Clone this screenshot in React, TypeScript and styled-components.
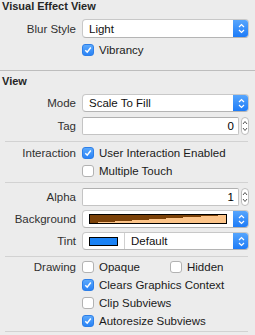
import styled, { createGlobalStyle } from "styled-components";

const Global = createGlobalStyle`
  body {
    margin: 0;
    background: #ececec;
    font-family: "Liberation Sans", Arial, sans-serif;
    font-size: 11.5px;
    color: #000;
  }
`;

const Panel = styled.div`
  width: 255px;
  height: 335px;
  display: flex;
  flex-direction: column;
  background: #ececec;
  overflow: hidden;
`;

const Section = styled.div<{ $top: number; $bottom: number }>`
  display: flex;
  flex-direction: column;
  padding-top: ${(p) => p.$top}px;
  padding-bottom: ${(p) => p.$bottom}px;
`;

const Header = styled.div`
  height: 13px;
  line-height: 13px;
  padding-left: 2px;
  font-size: 11px;
  font-weight: bold;
  color: #262626;
`;

const Rule = styled.div<{ $full?: boolean; $mt: number }>`
  height: 1px;
  margin-top: ${(p) => p.$mt}px;
  margin-left: ${(p) => (p.$full ? 0 : 5)}px;
  width: ${(p) => (p.$full ? 255 : 243)}px;
  background: ${(p) => (p.$full ? "#bdbdbd" : "#d2d2d2")};
`;

const Row = styled.div<{ $mt?: number; $h?: number }>`
  display: grid;
  grid-template-columns: 76px 167px;
  column-gap: 6px;
  align-items: center;
  height: ${(p) => p.$h ?? 18}px;
  margin-top: ${(p) => p.$mt ?? 0}px;
`;

const Label = styled.div`
  text-align: right;
  color: #303030;
  white-space: nowrap;
`;

const Popup = styled.div<{ $h?: number }>`
  position: relative;
  display: flex;
  align-items: center;
  height: ${(p) => p.$h ?? 18}px;
  box-sizing: border-box;
  background: #fff;
  border: 1px solid #c8c8c8;
  border-bottom-color: #b4b4b4;
  border-radius: 4px;
  padding-right: 15px;
  overflow: hidden;
`;

const PopupText = styled.span`
  padding-left: 6px;
  color: #111;
`;

const Arrows = styled.div`
  position: absolute;
  top: -1px;
  right: -1px;
  bottom: -1px;
  width: 16px;
  border-radius: 0 4px 4px 0;
  background: linear-gradient(#5aa8fd, #1a79f7);
  display: flex;
  align-items: center;
  justify-content: center;
`;

const Field = styled.div`
  display: flex;
  align-items: center;
  gap: 2px;
`;

const NumberBox = styled.div`
  flex: 1;
  height: 18px;
  box-sizing: border-box;
  background: #fff;
  border: 1px solid #c4c4c4;
  border-top-color: #b0b0b0;
  border-radius: 2px;
  text-align: right;
  padding-right: 4px;
  line-height: 16px;
`;

const Stepper = styled.div`
  width: 8px;
  height: 18px;
  box-sizing: border-box;
  border: 1px solid #bdbdbd;
  border-radius: 5px;
  background: #fff;
  display: flex;
  align-items: center;
  justify-content: center;
`;

const Checks = styled.div`
  display: flex;
  align-items: center;
`;

const Check = styled.label<{ $w?: number }>`
  display: flex;
  align-items: center;
  gap: 5px;
  width: ${(p) => (p.$w ? `${p.$w}px` : "auto")};
  color: #1a1a1a;
  white-space: nowrap;
`;

const Box = styled.span<{ $on: boolean }>`
  width: 12px;
  height: 12px;
  box-sizing: border-box;
  border-radius: 3px;
  display: flex;
  align-items: center;
  justify-content: center;
  background: ${(p) => (p.$on ? "linear-gradient(#5ca9fc, #2a83f6)" : "#fff")};
  border: 1px solid ${(p) => (p.$on ? "#2d7fe8" : "#b2b2b2")};
`;

const ColorWell = styled.div`
  margin-left: 6px;
  width: 136px;
  height: 8px;
  border: 1px solid #000;
  background: linear-gradient(to bottom right, #7b4108 50%, #fcc489 50%);
`;

const Swatch = styled.div`
  margin-left: 6px;
  width: 27px;
  height: 7px;
  border: 1px solid #000;
  background: #1a82f5;
`;

const Divider = styled.div`
  width: 1px;
  align-self: stretch;
  margin-left: 6px;
  background: #d0d0d0;
`;

function Chevrons({ color = "#fff" }: { color?: string }) {
  return (
    <svg width="7" height="11" viewBox="0 0 7 11">
      <polyline points="1,4 3.5,1.5 6,4" fill="none" stroke={color} strokeWidth="1.2" />
      <polyline points="1,7 3.5,9.5 6,7" fill="none" stroke={color} strokeWidth="1.2" />
    </svg>
  );
}

function CheckBox({ on, label, w }: { on: boolean; label: string; w?: number }) {
  return (
    <Check $w={w}>
      <Box $on={on}>
        {on && (
          <svg width="8" height="8" viewBox="0 0 8 8">
            <polyline points="1.3,4.2 3.2,6.2 6.8,1.5" fill="none" stroke="#fff" strokeWidth="1.5" />
          </svg>
        )}
      </Box>
      {label}
    </Check>
  );
}

function Select({ text, h }: { text: string; h?: number }) {
  return (
    <Popup $h={h}>
      <PopupText>{text}</PopupText>
      <Arrows>
        <Chevrons />
      </Arrows>
    </Popup>
  );
}

function NumberField({ value }: { value: string }) {
  return (
    <Field>
      <NumberBox>{value}</NumberBox>
      <Stepper>
        <svg width="6" height="14" viewBox="0 0 6 14">
          <polyline points="1,5 3,2.5 5,5" fill="none" stroke="#555" strokeWidth="1" />
          <polyline points="1,9 3,11.5 5,9" fill="none" stroke="#555" strokeWidth="1" />
        </svg>
      </Stepper>
    </Field>
  );
}

export default function App() {
  return (
    <Panel>
      <Global />
      <Section $top={0} $bottom={11}>
        <Header>Visual Effect View</Header>
        <Row $mt={6} $h={19}>
          <Label>Blur Style</Label>
          <Select text="Light" h={19} />
        </Row>
        <Row $mt={3}>
          <span />
          <CheckBox on label="Vibrancy" />
        </Row>
      </Section>
      <Rule $full $mt={0} />
      <Section $top={4} $bottom={0}>
        <Header>View</Header>
        <Row $mt={6}>
          <Label>Mode</Label>
          <Select text="Scale To Fill" />
        </Row>
        <Row $mt={5}>
          <Label>Tag</Label>
          <NumberField value="0" />
        </Row>
        <Rule $mt={6} />
        <Row $mt={2}>
          <Label>Interaction</Label>
          <CheckBox on label="User Interaction Enabled" />
        </Row>
        <Row>
          <span />
          <CheckBox on={false} label="Multiple Touch" />
        </Row>
        <Rule $mt={2} />
        <Row $mt={5}>
          <Label>Alpha</Label>
          <NumberField value="1" />
        </Row>
        <Row $mt={4}>
          <Label>Background</Label>
          <Popup>
            <ColorWell />
            <Arrows>
              <Chevrons />
            </Arrows>
          </Popup>
        </Row>
        <Row $mt={4}>
          <Label>Tint</Label>
          <Popup>
            <Swatch />
            <Divider />
            <PopupText>Default</PopupText>
            <Arrows>
              <Chevrons />
            </Arrows>
          </Popup>
        </Row>
        <Rule $mt={6} />
        <Row $mt={1}>
          <Label>Drawing</Label>
          <Checks>
            <CheckBox on={false} label="Opaque" w={88} />
            <CheckBox on={false} label="Hidden" />
          </Checks>
        </Row>
        <Row>
          <span />
          <CheckBox on label="Clears Graphics Context" />
        </Row>
        <Row>
          <span />
          <CheckBox on={false} label="Clip Subviews" />
        </Row>
        <Row>
          <span />
          <CheckBox on label="Autoresize Subviews" />
        </Row>
        <Rule $mt={1} />
      </Section>
    </Panel>
  );
}
